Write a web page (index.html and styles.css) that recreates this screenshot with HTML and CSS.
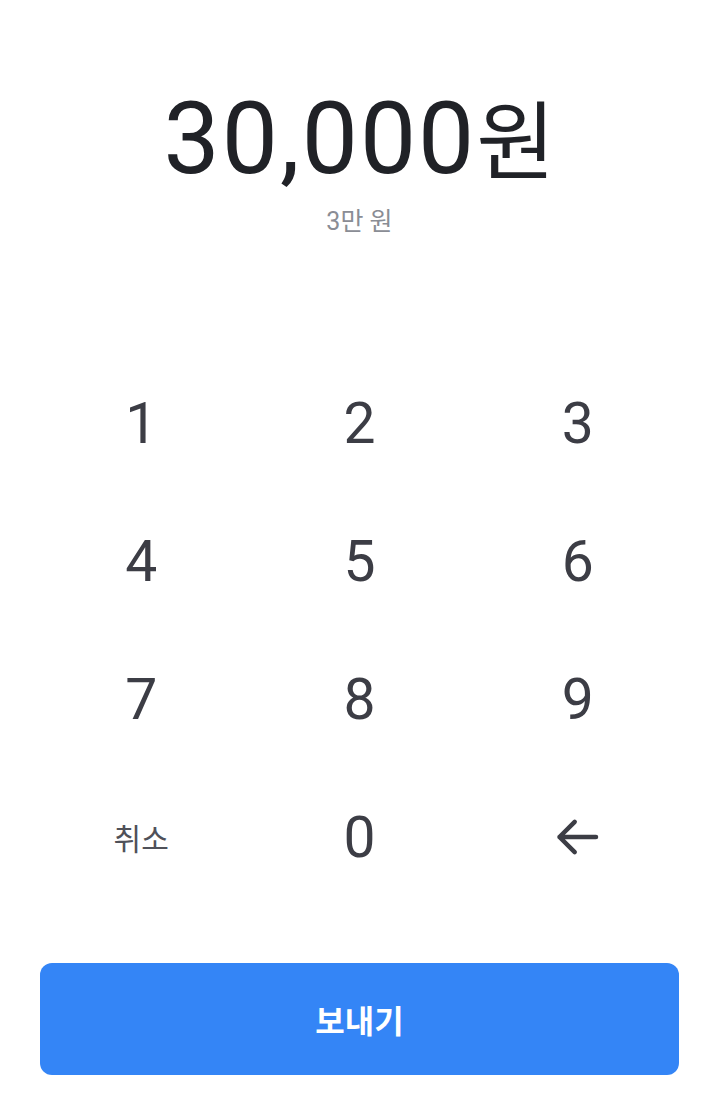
FILE: index.html
```html
<!DOCTYPE html>
<html>
<head>
    <meta charset="utf-8">
    <title>송금</title>
    <link rel="stylesheet" href="styles.css">
</head>
<body>
    <div class="screen">
        <div class="amount">
            <div class="amount-value">30,000<span class="unit">원</span></div>
            <div class="amount-hint">3만 원</div>
        </div>

        <div class="keypad">
            <button class="key">1</button>
            <button class="key">2</button>
            <button class="key">3</button>
            <button class="key">4</button>
            <button class="key">5</button>
            <button class="key">6</button>
            <button class="key">7</button>
            <button class="key">8</button>
            <button class="key">9</button>
            <button class="key key-text">취소</button>
            <button class="key">0</button>
            <button class="key key-back">
                <svg width="44" height="38" viewBox="0 0 44 38">
                    <path d="M18.7 3.8 L3.5 19 L18.7 34.2 M3.5 19 L40 19" fill="none" stroke="#3c3d45" stroke-width="4.5" stroke-linecap="round" stroke-linejoin="round"/>
                </svg>
            </button>
        </div>

        <div class="send-wrap">
            <button class="send">보내기</button>
        </div>
    </div>
</body>
</html>
```

FILE: styles.css
```css
body {
    margin: 0;
    background: #ffffff;
    font-family: Roboto, "Noto Sans CJK KR", sans-serif;
}

.screen {
    width: 719px;
    height: 1106px;
    display: flex;
    flex-direction: column;
}

.amount {
    padding-top: 86px;
    text-align: center;
}

.amount-value {
    font-size: 100px;
    line-height: 100px;
    color: #202227;
    letter-spacing: 2px;
}

.amount-value .unit {
    font-family: "Noto Sans CJK KR", sans-serif;
    font-size: 86px;
    letter-spacing: 0;
}

.amount-hint {
    margin-top: 20px;
    font-size: 25px;
    line-height: 25px;
    color: #8a8d95;
}

.keypad {
    margin-top: 120px;
    padding: 0 32px;
    display: grid;
    grid-template-columns: repeat(3, 1fr);
    grid-auto-rows: 138px;
}

.key {
    border: none;
    background: none;
    padding: 0;
    display: flex;
    align-items: center;
    justify-content: center;
    font-family: Roboto, "Noto Sans CJK KR", sans-serif;
    font-size: 57px;
    line-height: 57px;
    color: #3c3d45;
}

.key-text {
    font-family: "Noto Sans CJK KR", sans-serif;
    font-size: 30px;
    line-height: 30px;
    color: #4f5159;
}

.send-wrap {
    margin-top: 57px;
    padding: 0 40px;
}

.send {
    width: 100%;
    height: 112px;
    border: none;
    border-radius: 12px;
    background: #3485f6;
    color: #ffffff;
    font-family: "Noto Sans CJK KR", sans-serif;
    font-weight: 700;
    font-size: 32px;
}
```
